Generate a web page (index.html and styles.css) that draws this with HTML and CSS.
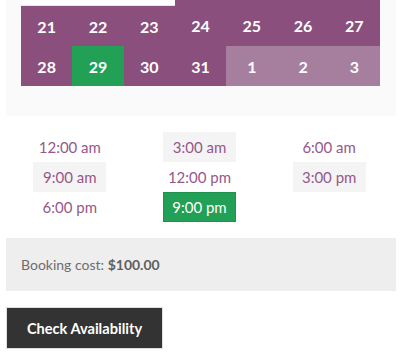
FILE: index.html
```html
<!DOCTYPE html>
<html lang="en">
<head>
    <meta charset="UTF-8">
    <meta name="viewport" content="width=device-width, initial-scale=1.0">
    <title>Booking Form</title>
    <link rel="stylesheet" href="styles.css">
</head>
<body>
    <div class="booking-form">
        <!-- Calendar -->
        <div class="picker">
            <table class="calendar">
                <tr class="week-cut">
                    <td class="empty"></td>
                    <td class="empty"></td>
                    <td class="empty"></td>
                    <td></td>
                    <td></td>
                    <td></td>
                    <td></td>
                </tr>
                <tr>
                    <td>21</td>
                    <td>22</td>
                    <td>23</td>
                    <td>24</td>
                    <td>25</td>
                    <td>26</td>
                    <td>27</td>
                </tr>
                <tr>
                    <td>28</td>
                    <td class="selected">29</td>
                    <td>30</td>
                    <td>31</td>
                    <td class="other-month">1</td>
                    <td class="other-month">2</td>
                    <td class="other-month">3</td>
                </tr>
            </table>
        </div>

        <!-- Time slots -->
        <ul class="slots">
            <li><span class="slot">12:00 am</span></li>
            <li><span class="slot alt">3:00 am</span></li>
            <li><span class="slot">6:00 am</span></li>
            <li><span class="slot alt">9:00 am</span></li>
            <li><span class="slot">12:00 pm</span></li>
            <li><span class="slot alt">3:00 pm</span></li>
            <li><span class="slot">6:00 pm</span></li>
            <li><span class="slot chosen">9:00 pm</span></li>
        </ul>

        <div class="cost">Booking cost: <strong>$100.00</strong></div>

        <button class="check-button">Check Availability</button>
    </div>
</body>
</html>
```

FILE: styles.css
```css
body {
    margin: 0;
    font-family: Lato, "Open Sans", sans-serif;
    background-color: #fff;
}

.booking-form {
    margin: 0 4px 0 6px;
}

.picker {
    background-color: #fafafa;
    padding: 0 16px 30px 15px;
}

.calendar {
    width: 359px;
    border-collapse: collapse;
    table-layout: fixed;
}

.calendar td {
    height: 40px;
    padding: 0;
    text-align: center;
    background-color: #8a4f7d;
    color: #fff;
    font-size: 16px;
    font-weight: 700;
}

.calendar .week-cut td {
    height: 5px;
}

.calendar .week-cut td.empty {
    background-color: #fff;
    border-bottom: 1px solid #e6e6e6;
}

.calendar td.selected {
    background-color: #22a055;
}

.calendar td.other-month {
    background-color: #a67f9f;
}

.slots {
    list-style: none;
    margin: 16px 0 16px -1px;
    padding: 0;
    width: 389px;
    display: grid;
    grid-template-columns: repeat(3, 1fr);
}

.slots li {
    display: flex;
    justify-content: center;
}

.slot {
    width: 73px;
    height: 30px;
    line-height: 30px;
    text-align: center;
    font-size: 15px;
    color: #96588a;
}

.slot.alt {
    background-color: #f4f4f4;
}

.slot.chosen {
    background-color: #22a055;
    color: #fff;
    box-shadow: inset 0 0 0 1px #1f934e;
}

.cost {
    background-color: #eeeeee;
    height: 53px;
    line-height: 53px;
    padding-left: 15px;
    font-size: 14px;
    color: #6d6d6d;
}

.cost strong {
    color: #5f5f5f;
}

.check-button {
    margin-top: 16px;
    width: 157px;
    height: 42px;
    background-color: #333;
    border: 1px solid #e0e0e0;
    color: #fff;
    font-family: Lato, sans-serif;
    font-size: 14.6px;
    font-weight: 700;
    cursor: pointer;
}
```
